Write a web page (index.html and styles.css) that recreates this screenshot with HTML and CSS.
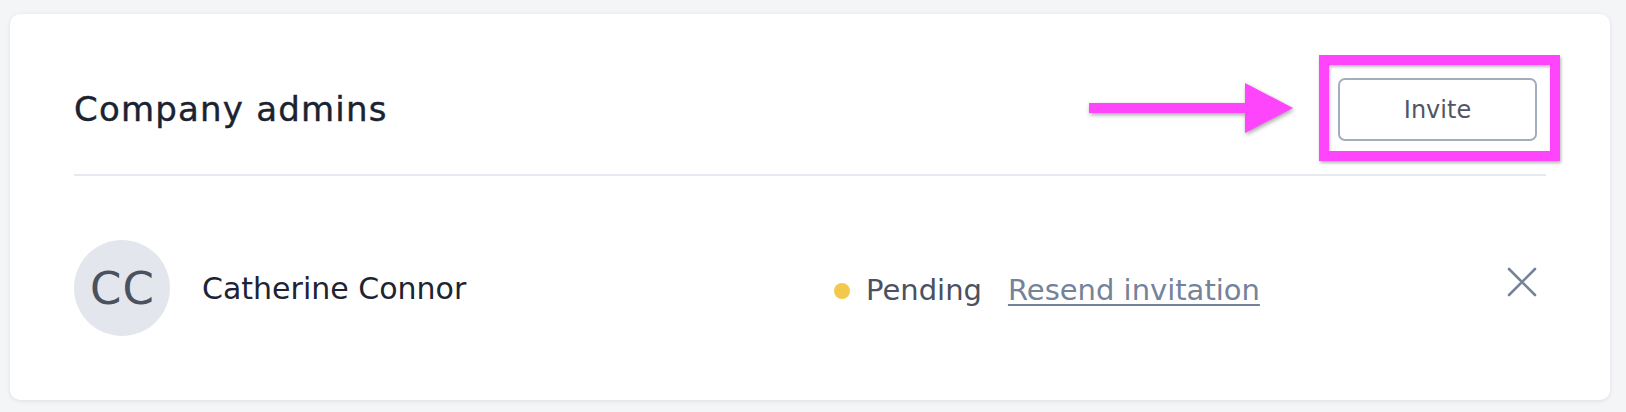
FILE: index.html
```html
<!DOCTYPE html>
<html lang="en">
<head>
<meta charset="utf-8">
<title>Company admins</title>
<link rel="stylesheet" href="styles.css">
</head>
<body>
<section class="card">
  <header class="card-header">
    <h2 class="title">Company admins</h2>
    <div class="invite-wrap">
      <svg class="annot-arrow" width="206" height="52" viewBox="0 0 206 52" aria-hidden="true">
        <rect x="1" y="21" width="158" height="10" fill="#ff45fc"/>
        <polygon points="157,1 157,51 205,26" fill="#ff45fc"/>
      </svg>
      <button class="btn-invite" type="button">Invite</button>
      <span class="annot-frame" aria-hidden="true"></span>
    </div>
  </header>
  <div class="admin-row">
    <div class="avatar">CC</div>
    <div class="name">Catherine Connor</div>
    <div class="status">
      <span class="dot"></span>
      <span class="status-label">Pending</span>
      <a class="resend" href="#">Resend invitation</a>
    </div>
    <button class="remove" type="button" aria-label="Remove">
      <svg width="30" height="30" viewBox="0 0 30 30">
        <path d="M2 2 L28 28 M28 2 L2 28" stroke="#74839a" stroke-width="2.6" stroke-linecap="round" fill="none"/>
      </svg>
    </button>
  </div>
</section>
</body>
</html>
```

FILE: styles.css
```css
* { box-sizing: border-box; }

html, body {
  margin: 0;
  padding: 0;
}

body {
  background: #f4f5f7;
  font-family: "DejaVu Sans", "Noto Sans", sans-serif;
  width: 1626px;
  height: 412px;
  overflow: hidden;
  padding: 14px 16px 0 10px;
}

.card {
  width: 1600px;
  height: 386px;
  background: #ffffff;
  border-radius: 10px;
  box-shadow: 0 1px 4px rgba(20, 30, 50, 0.10);
  padding: 0 64px;
  display: flex;
  flex-direction: column;
}

.card-header {
  height: 162px;
  padding-top: 30px;
  border-bottom: 2px solid #e6e9ef;
  display: flex;
  align-items: center;
  justify-content: space-between;
}

.title {
  margin: 0;
  font-size: 34px;
  font-weight: normal;
  letter-spacing: 1.2px;
  color: #1b2331;
  line-height: 40px;
  -webkit-text-stroke: 0.4px #1b2331;
}

.invite-wrap {
  position: relative;
  margin-right: 9px;
  margin-top: 1px;
}

.btn-invite {
  display: block;
  width: 199px;
  height: 63px;
  background: #fff;
  border: 2px solid #a3adbb;
  border-radius: 7px;
  font-family: "DejaVu Sans", "Noto Sans", sans-serif;
  font-size: 24px;
  color: #4f5666;
  padding: 0;
  cursor: pointer;
}

.annot-frame {
  position: absolute;
  left: -19px;
  top: -23px;
  width: 241px;
  height: 106px;
  border: 10px solid #ff45fc;
  box-shadow: 1px 2px 3px rgba(0, 0, 0, 0.3), inset 1px 2px 3px rgba(0, 0, 0, 0.25);
  pointer-events: none;
}

.annot-arrow {
  position: absolute;
  left: -250px;
  top: 4px;
  filter: drop-shadow(1px 2px 2px rgba(0, 0, 0, 0.35));
}

.admin-row {
  flex: 1;
  display: flex;
  align-items: center;
}

.avatar {
  flex: 0 0 96px;
  width: 96px;
  height: 96px;
  border-radius: 50%;
  background: #e3e6ed;
  color: #4a5160;
  font-size: 45px;
  letter-spacing: 1px;
  display: flex;
  align-items: center;
  justify-content: center;
  padding-left: 1px;
  margin-right: 32px;
}

.name {
  flex: 0 0 632px;
  font-size: 30px;
  color: #1c2434;
}

.status {
  display: flex;
  align-items: center;
  font-size: 29px;
  margin-top: 4px;
}

.dot {
  width: 16px;
  height: 16px;
  border-radius: 50%;
  background: #f2c94c;
  margin-right: 16px;
  margin-top: 2px;
}

.status-label {
  color: #4a5160;
  margin-right: 26px;
}

.resend {
  color: #74839a;
  text-decoration: underline;
  text-decoration-thickness: 2px;
  text-underline-offset: 4px;
}

.remove {
  margin-left: auto;
  width: 48px;
  height: 48px;
  padding: 0;
  border: 0;
  background: transparent;
  display: flex;
  align-items: center;
  justify-content: center;
  margin-top: -12px;
  cursor: pointer;
}
```
